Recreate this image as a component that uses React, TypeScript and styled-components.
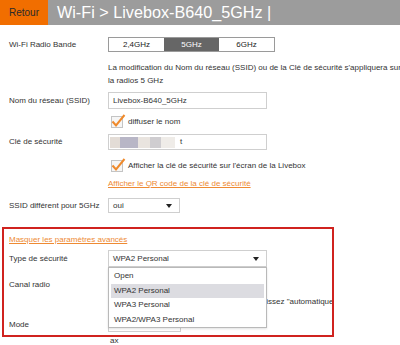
import React from 'react'
import styled, { createGlobalStyle } from 'styled-components'

const GlobalStyle = createGlobalStyle`
  html, body {
    margin: 0;
    padding: 0;
    background: #fff;
  }
  body {
    width: 400px;
    height: 345px;
    overflow: hidden;
    font-family: "Liberation Sans", Arial, sans-serif;
    font-size: 8px;
    color: #333;
  }
`

const Header = styled.header`
  display: flex;
  height: 25px;
  background: #9c9c9c;
`
const BackButton = styled.div`
  width: 48px;
  box-sizing: border-box;
  padding-left: 9px;
  display: flex;
  align-items: center;
  background: #f16e00;
  color: #2a2a2a;
  font-size: 10px;
`
const Title = styled.h1`
  margin: 0;
  padding-left: 9px;
  font-size: 16.2px;
  font-weight: normal;
  line-height: 25px;
  color: #fff;
  white-space: nowrap;
`

const Content = styled.main`
  padding-top: 12px;
`

const Row = styled.div<{ $mt?: number; $h?: number }>`
  display: grid;
  grid-template-columns: 99px auto;
  align-items: center;
  padding-left: 9px;
  margin-top: ${(p) => p.$mt ?? 0}px;
  height: ${(p) => (p.$h ? `${p.$h}px` : 'auto')};
  line-height: 12px;
`
const Label = styled.span`
  white-space: nowrap;
`
const Field = styled.div`
  position: relative;
  display: flex;
  align-items: center;
`

const Segmented = styled.div`
  display: flex;
  width: 167px;
  height: 15px;
  box-sizing: border-box;
  border: 1px solid #9a9a9a;
`
const Segment = styled.div<{ $active?: boolean }>`
  flex: 1;
  display: flex;
  align-items: center;
  justify-content: center;
  background: ${(p) => (p.$active ? '#666' : '#fff')};
  color: ${(p) => (p.$active ? '#fff' : '#222')};
`

const Note = styled.p`
  margin: 9px 0 0 108px;
  line-height: 13px;
  white-space: nowrap;
`

const TextInput = styled.div<{ $w: number; $h: number }>`
  width: ${(p) => p.$w}px;
  height: ${(p) => p.$h}px;
  box-sizing: border-box;
  border: 1px solid #cfcfcf;
  padding-left: 4px;
  display: flex;
  align-items: center;
  background: #fff;
  color: #333;
`

const Blur = styled.span<{ $c: string; $w: number }>`
  display: inline-block;
  width: ${(p) => p.$w}px;
  height: 11px;
  background: ${(p) => p.$c};
`
const BlurGroup = styled.span`
  display: flex;
  margin-left: -3px;
  margin-right: 5px;
  filter: blur(0.6px);
`

const Select = styled(TextInput)`
  justify-content: space-between;
  padding-right: 7px;
  &::after {
    content: '';
    margin-left: auto;
    border-left: 3.5px solid transparent;
    border-right: 3.5px solid transparent;
    border-top: 4px solid #222;
  }
`

const CheckLine = styled.div<{ $mt: number }>`
  display: flex;
  align-items: center;
  gap: 3px;
  margin: ${(p) => p.$mt}px 0 0 111px;
  height: 12px;
`

const Link = styled.a<{ $ml?: number; $mt?: number }>`
  display: block;
  margin: ${(p) => p.$mt ?? 0}px 0 0 ${(p) => p.$ml ?? 0}px;
  line-height: 12px;
  color: #ee8a33;
  text-decoration: underline;
  white-space: nowrap;
`

const Advanced = styled.section`
  margin: 14px 0 0 2px;
  width: 332px;
  height: 110px;
  box-sizing: border-box;
  border: 2px solid #d0231f;
  overflow: hidden;
  padding-top: 5px;
  & > ${Row} {
    padding-left: 5px;
  }
`

const Hint = styled.div`
  margin: 3px 0 0 107px;
  line-height: 12px;
  white-space: nowrap;
`

const Dropdown = styled.ul`
  position: absolute;
  top: 100%;
  left: 0;
  z-index: 2;
  width: 159px;
  height: 61px;
  box-sizing: border-box;
  margin: 0;
  padding: 1px 2px 0;
  list-style: none;
  background: #fff;
  border: 1px solid #b9b9b9;
  box-shadow: 0 1px 2px rgba(0, 0, 0, 0.12);
`
const Option = styled.li<{ $selected?: boolean }>`
  height: 14.5px;
  line-height: 14.5px;
  padding-left: 3px;
  background: ${(p) => (p.$selected ? '#dcdce1' : 'transparent')};
  color: #333;
`

const Trailing = styled.div`
  margin: 0 0 0 110px;
  line-height: 8px;
`

const Checkbox = () => (
  <svg width="14" height="14" viewBox="0 0 14 14" style={{ overflow: 'visible' }}>
    <rect x="0.5" y="2.5" width="11" height="11" fill="#f6f6f6" stroke="#c4c4c4" />
    <polyline points="1.5,7.5 5,11.5 13.5,1" fill="none" stroke="#ef8a2c" strokeWidth="2" />
  </svg>
)

const securityOptions = ['Open', 'WPA2 Personal', 'WPA3 Personal', 'WPA2/WPA3 Personal']

const keyBlur = [
  { c: '#e3dcd6', w: 10 },
  { c: '#b8b6c6', w: 18 },
  { c: '#e9e4df', w: 12 },
  { c: '#cfcdd0', w: 11 },
  { c: '#efece8', w: 14 },
]

export default function App() {
  return (
    <>
      <GlobalStyle />
      <Header>
        <BackButton>Retour</BackButton>
        <Title>Wi-Fi &gt; Livebox-B640_5GHz |</Title>
      </Header>
      <Content>
        <Row $h={15}>
          <Label>Wi-Fi Radio Bande</Label>
          <Segmented>
            <Segment>2,4GHz</Segment>
            <Segment $active>5GHz</Segment>
            <Segment>6GHz</Segment>
          </Segmented>
        </Row>
        <Note>
          La modification du Nom du réseau (SSID) ou de la Clé de sécurité s'appliquera sur
          <br />
          la radios 5 GHz
        </Note>
        <Row $mt={5} $h={17}>
          <Label>Nom du réseau (SSID)</Label>
          <TextInput $w={159} $h={17}>Livebox-B640_5GHz</TextInput>
        </Row>
        <CheckLine $mt={6}>
          <Checkbox />
          <span>diffuser le nom</span>
        </CheckLine>
        <Row $mt={7} $h={16}>
          <Label>Clé de sécurité</Label>
          <TextInput $w={159} $h={16}>
            <BlurGroup>
              {keyBlur.map((b, i) => (
                <Blur key={i} $c={b.c} $w={b.w} />
              ))}
            </BlurGroup>
            t
          </TextInput>
        </Row>
        <CheckLine $mt={9}>
          <Checkbox />
          <span>Afficher la clé de sécurité sur l'écran de la Livebox</span>
        </CheckLine>
        <Link $ml={108} $mt={7}>Afficher le QR code de la clé de sécurité</Link>
        <Row $mt={8} $h={15}>
          <Label>SSID différent pour 5GHz</Label>
          <Select $w={72} $h={15}>oui</Select>
        </Row>

        <Advanced>
          <Link $ml={5}>Masquer les paramètres avancés</Link>
          <Row $mt={4} $h={17}>
            <Label>Type de sécurité</Label>
            <Field>
              <Select $w={159} $h={17}>WPA2 Personal</Select>
              <Dropdown>
                {securityOptions.map((o) => (
                  <Option key={o} $selected={o === 'WPA2 Personal'}>
                    {o}
                  </Option>
                ))}
              </Dropdown>
            </Field>
          </Row>
          <Row $mt={10} $h={16}>
            <Label>Canal radio</Label>
            <Select $w={72} $h={16} />
          </Row>
          <Hint>Pour obtenir de meilleures performances, laissez "automatique" (recommandé)</Hint>
          <Row $mt={9} $h={15}>
            <Label>Mode</Label>
            <Select $w={73} $h={15} />
          </Row>
        </Advanced>
        <Trailing>ax</Trailing>
      </Content>
    </>
  )
}
